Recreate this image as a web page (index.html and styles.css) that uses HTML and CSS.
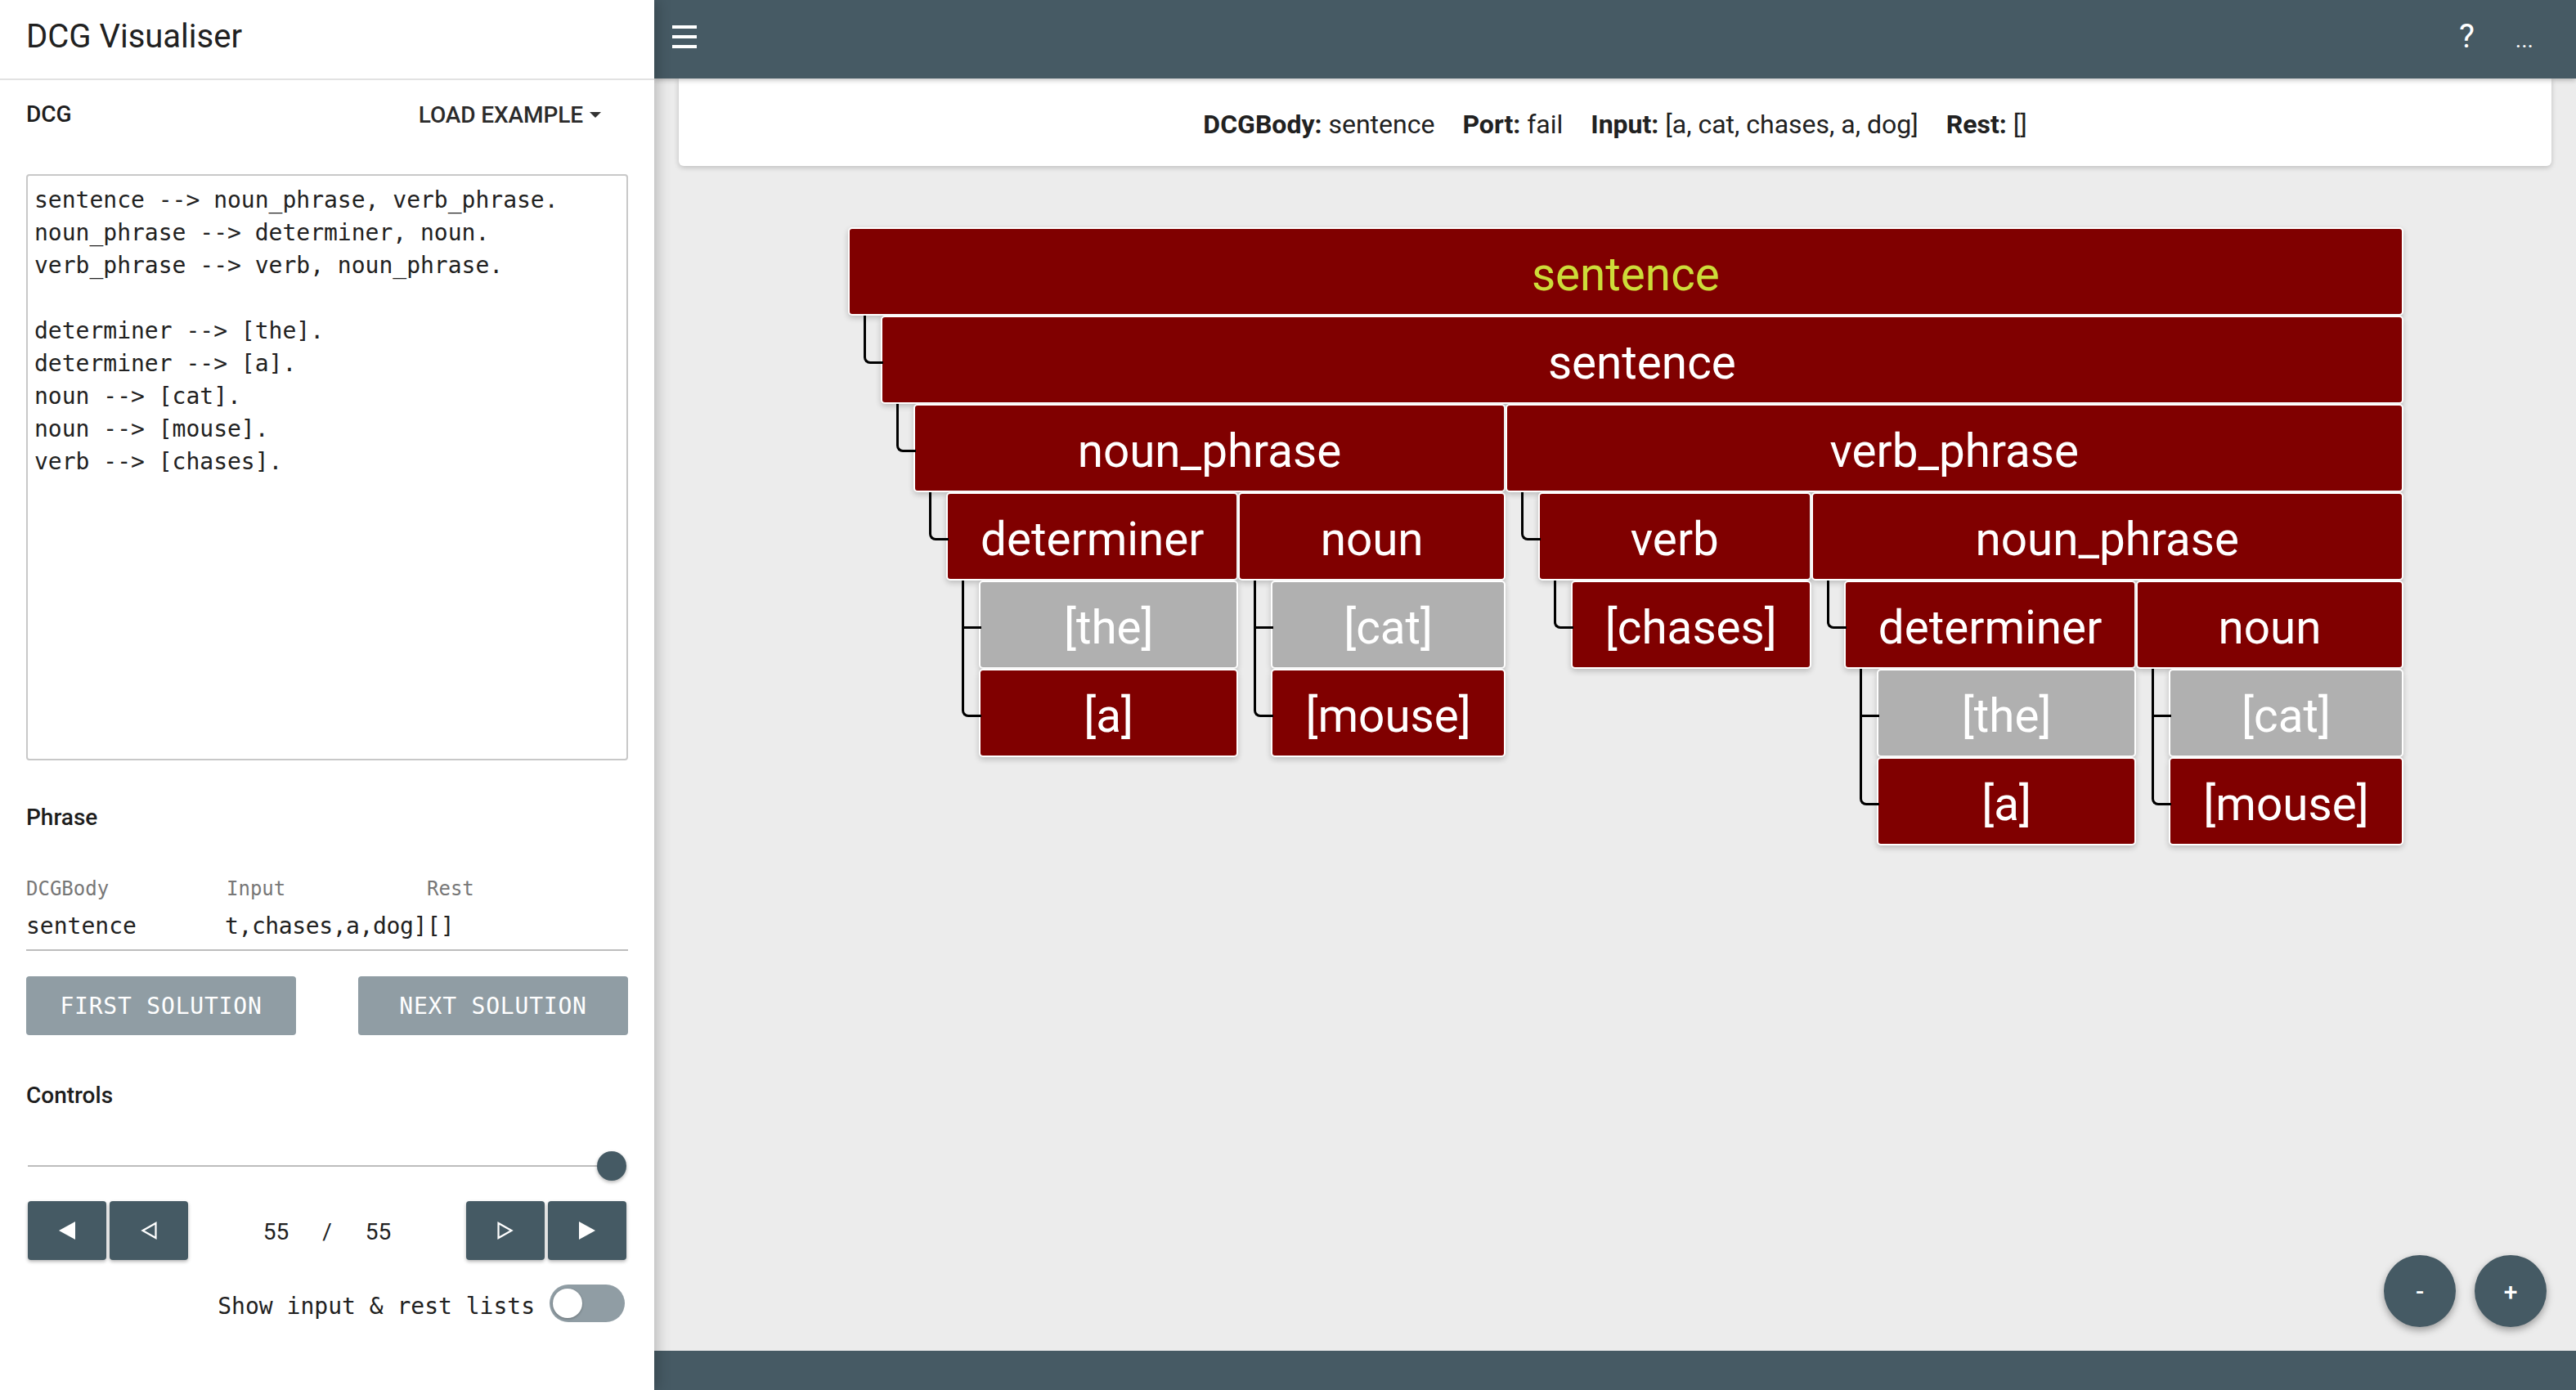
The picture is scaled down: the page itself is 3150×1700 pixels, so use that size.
FILE: index.html
```html
<!DOCTYPE html>
<html lang="en">
<head>
<meta charset="utf-8">
<title>DCG Visualiser</title>
<link rel="stylesheet" href="styles.css">
</head>
<body>
<div class="app">
  <aside class="sidebar">
    <header class="side-head"><h1 class="app-title">DCG Visualiser</h1></header>
    <div class="side-body">
      <div class="dcg-row">
        <span class="section-title">DCG</span>
        <button class="load-btn">LOAD EXAMPLE <svg class="caret" width="14" height="7" viewBox="0 0 14 7"><path d="M0 0H14L7 7Z" fill="#333"/></svg></button>
      </div>
      <pre class="code">sentence --&gt; noun_phrase, verb_phrase.
noun_phrase --&gt; determiner, noun.
verb_phrase --&gt; verb, noun_phrase.

determiner --&gt; [the].
determiner --&gt; [a].
noun --&gt; [cat].
noun --&gt; [mouse].
verb --&gt; [chases].</pre>
      <div class="section-title phrase-title">Phrase</div>
      <div class="phrase-table">
        <div class="th">DCGBody</div><div class="th">Input</div><div class="th">Rest</div>
        <div class="td">sentence</div><div class="td input-val">t,chases,a,dog]</div><div class="td">[]</div>
      </div>
      <div class="solution-row">
        <button class="sol-btn">FIRST SOLUTION</button>
        <button class="sol-btn">NEXT SOLUTION</button>
      </div>
      <div class="section-title controls-title">Controls</div>
      <div class="slider"><div class="track"></div><div class="thumb"></div></div>
      <div class="nav-row">
        <div class="nav-group">
          <button class="nav-btn"><svg width="20" height="22" viewBox="0 0 20 22"><path d="M20 0V22L0 11Z" fill="#fff"/></svg></button>
          <button class="nav-btn"><svg width="20" height="22" viewBox="0 0 20 22"><path d="M18.5 2V20L2.5 11Z" fill="none" stroke="#fff" stroke-width="2.2" stroke-linejoin="miter"/></svg></button>
        </div>
        <div class="counter"><span>55</span><span>/</span><span>55</span></div>
        <div class="nav-group">
          <button class="nav-btn"><svg width="20" height="22" viewBox="0 0 20 22"><path d="M1.5 2V20L17.5 11Z" fill="none" stroke="#fff" stroke-width="2.2" stroke-linejoin="miter"/></svg></button>
          <button class="nav-btn"><svg width="20" height="22" viewBox="0 0 20 22"><path d="M0 0V22L20 11Z" fill="#fff"/></svg></button>
        </div>
      </div>
      <div class="toggle-row">
        <span class="toggle-label">Show input &amp; rest lists</span>
        <span class="switch"><span class="knob"></span></span>
      </div>
    </div>
  </aside>
  <main class="main">
    <div class="topbar">
      <svg class="menu-icon" width="30" height="28" viewBox="0 0 30 28"><rect x="0" y="0" width="30" height="4" fill="#fff"/><rect x="0" y="12" width="30" height="4" fill="#fff"/><rect x="0" y="24" width="30" height="4" fill="#fff"/></svg>
      <div class="top-actions">
        <span class="help">?</span>
        <span class="more">...</span>
      </div>
    </div>
    <div class="canvas">
      <div class="info-card">
        <span><b>DCGBody:</b> sentence</span>
        <span><b>Port:</b> fail</span>
        <span><b>Input:</b> [a, cat, chases, a, dog]</span>
        <span><b>Rest:</b> []</span>
      </div>
      <div class="tree">
        <div class="node">
          <div class="box goal">sentence</div>
          <div class="kids alt">
            <div class="node conn">
              <div class="box">sentence</div>
              <div class="kids seq">
                <div class="node conn">
                  <div class="box">noun_phrase</div>
                  <div class="kids seq">
                    <div class="node conn">
                      <div class="box">determiner</div>
                      <div class="kids alt">
                        <div class="node conn tee"><div class="box fail">[the]</div></div>
                        <div class="node conn"><div class="box">[a]</div></div>
                      </div>
                    </div>
                    <div class="node">
                      <div class="box">noun</div>
                      <div class="kids alt">
                        <div class="node conn tee"><div class="box fail">[cat]</div></div>
                        <div class="node conn"><div class="box">[mouse]</div></div>
                      </div>
                    </div>
                  </div>
                </div>
                <div class="node">
                  <div class="box">verb_phrase</div>
                  <div class="kids seq">
                    <div class="node conn">
                      <div class="box">verb</div>
                      <div class="kids alt">
                        <div class="node conn"><div class="box">[chases]</div></div>
                      </div>
                    </div>
                    <div class="node">
                      <div class="box">noun_phrase</div>
                      <div class="kids seq">
                        <div class="node conn">
                          <div class="box">determiner</div>
                          <div class="kids alt">
                            <div class="node conn tee"><div class="box fail">[the]</div></div>
                            <div class="node conn"><div class="box">[a]</div></div>
                          </div>
                        </div>
                        <div class="node">
                          <div class="box">noun</div>
                          <div class="kids alt">
                            <div class="node conn tee"><div class="box fail">[cat]</div></div>
                            <div class="node conn"><div class="box">[mouse]</div></div>
                          </div>
                        </div>
                      </div>
                    </div>
                  </div>
                </div>
              </div>
            </div>
          </div>
        </div>
      </div>
      <div class="fabs">
        <button class="fab">-</button>
        <button class="fab">+</button>
      </div>
    </div>
    <div class="bottombar"></div>
  </main>
</div>
</body>
</html>
```
FILE: styles.css
```css
* { box-sizing: border-box; }
html, body { margin: 0; padding: 0; }
body {
  width: 3150px;
  height: 1700px;
  overflow: hidden;
  font-family: Roboto, "Liberation Sans", sans-serif;
  color: #212121;
  background: #ececec;
}
.app { display: flex; height: 1700px; }

/* ---------- sidebar ---------- */
.sidebar {
  width: 800px;
  flex: none;
  background: #fff;
  position: relative;
  z-index: 3;
  box-shadow: 4px 0 16px rgba(0, 0, 0, 0.22);
  display: flex;
  flex-direction: column;
}
.side-head {
  height: 98px;
  border-bottom: 2px solid #e2e2e2;
  display: flex;
  align-items: center;
  padding: 0 32px 8px;
}
.app-title { margin: 0; font-size: 40px; font-weight: 400; color: #212121; }
.side-body { padding: 0 32px; display: flex; flex-direction: column; }
.dcg-row {
  height: 82px;
  display: flex;
  align-items: center;
  justify-content: space-between;
}
.section-title { font-size: 28px; font-weight: 500; line-height: 40px; color: #1d1d1d; padding-top: 2px; }
.load-btn {
  border: 0;
  background: none;
  font-family: Roboto, "Liberation Sans", sans-serif;
  font-size: 28px;
  font-weight: 500;
  color: #2b2b2b;
  display: flex;
  align-items: center;
  gap: 8px;
  padding: 2px 33px 0 0;
  letter-spacing: -0.1px;
}
.code {
  margin: 33px 0 0;
  height: 717px;
  border: 2px solid #c8c8c8;
  border-radius: 4px;
  padding: 10px 8px 8px;
  font-family: "DejaVu Sans Mono", monospace;
  font-size: 28px;
  line-height: 40px;
  color: #212121;
  white-space: pre;
  overflow: hidden;
}
.phrase-title { margin-top: 48px; }
.phrase-table {
  margin-top: 49px;
  display: grid;
  grid-template-columns: 245px 245px 1fr;
  row-gap: 10px;
  padding-top: 2px;
  padding-bottom: 8px;
  border-bottom: 2px solid #bdbdbd;
  font-family: "DejaVu Sans Mono", monospace;
}
.th { font-size: 24px; line-height: 32px; color: #777; }
.td { font-size: 28px; line-height: 40px; color: #212121; white-space: nowrap; }
.input-val { letter-spacing: -0.4px; margin-left: -2px; }
.solution-row { margin-top: 31px; display: flex; justify-content: space-between; }
.sol-btn {
  width: 330px;
  height: 72px;
  border: 0;
  border-radius: 4px;
  background: #909da4;
  color: #fff;
  font-family: "DejaVu Sans Mono", monospace;
  font-size: 28px;
  letter-spacing: 0.8px;
  padding-top: 2px;
}
.controls-title { margin-top: 52px; }
.slider {
  margin-top: 46px;
  height: 40px;
  display: flex;
  align-items: center;
  padding-left: 2px;
}
.track { flex: 1; height: 2px; background: #bdbdbd; }
.thumb {
  width: 36px;
  height: 36px;
  border-radius: 50%;
  background: #455a64;
  box-shadow: 0 2px 4px rgba(0, 0, 0, 0.3);
  margin-right: 2px;
}
.nav-row {
  margin-top: 23px;
  display: flex;
  justify-content: space-between;
  align-items: center;
  padding: 0 2px;
}
.nav-group { display: flex; gap: 4px; }
.nav-btn {
  width: 96px;
  height: 72px;
  border: 0;
  border-radius: 4px;
  background: #455a64;
  box-shadow: 0 2px 4px rgba(0, 0, 0, 0.3);
  display: flex;
  align-items: center;
  justify-content: center;
  padding: 0;
}
.counter {
  display: flex;
  gap: 41px;
  font-family: Roboto, "Liberation Sans", sans-serif;
  font-size: 28px;
  color: #212121;
  padding-top: 2px;
}
.toggle-row {
  margin-top: 29px;
  height: 48px;
  display: flex;
  justify-content: flex-end;
  align-items: center;
  gap: 18px;
  padding-right: 4px;
}
.toggle-label {
  font-family: "DejaVu Sans Mono", monospace;
  font-size: 28px;
  color: #212121;
  padding-top: 6px;
}
.switch {
  width: 92px;
  height: 46px;
  border-radius: 23px;
  background: #909da4;
  display: flex;
  align-items: center;
  padding-left: 4px;
}
.knob {
  width: 36px;
  height: 36px;
  border-radius: 50%;
  background: #fff;
  box-shadow: 0 1px 3px rgba(0, 0, 0, 0.3);
}

/* ---------- main ---------- */
.main { flex: 1; display: flex; flex-direction: column; min-width: 0; }
.topbar {
  height: 96px;
  flex: none;
  background: #465a64;
  display: flex;
  align-items: center;
  position: relative;
  z-index: 2;
  box-shadow: 0 2px 6px rgba(0, 0, 0, 0.25);
  padding: 0 52px 0 22px;
  color: #fff;
}
.menu-icon { display: block; align-self: flex-start; margin-top: 31px; }
.top-actions {
  margin-left: auto;
  display: flex;
  align-items: baseline;
  gap: 50px;
  padding-bottom: 6px;
}
.help { font-size: 40px; line-height: 48px; }
.more { font-size: 28px; }
.canvas { flex: 1; position: relative; background: #ececec; }
.info-card {
  margin: 0 30px;
  height: 107px;
  background: #fff;
  border-radius: 0 0 6px 6px;
  box-shadow: 0 2px 6px rgba(0, 0, 0, 0.2);
  display: flex;
  align-items: center;
  justify-content: center;
  gap: 34px;
  font-size: 32px;
  color: #212121;
  padding-top: 4px;
}
.info-card b { font-weight: 700; }
.bottombar { height: 48px; flex: none; background: #465a64; }
.fabs {
  position: absolute;
  right: 36px;
  bottom: 29px;
  display: flex;
  gap: 23px;
}
.fab {
  width: 88px;
  height: 88px;
  border-radius: 50%;
  border: 0;
  background: #455a64;
  color: #fff;
  font-family: Roboto, "Liberation Sans", sans-serif;
  font-size: 30px;
  font-weight: 500;
  box-shadow: 0 4px 10px rgba(0, 0, 0, 0.35);
  padding: 0;
}

/* ---------- tree ---------- */
.tree { margin: 75px 0 0 237px; display: flex; align-items: flex-start; }
.node { display: flex; flex-direction: column; position: relative; flex: none; }
.box {
  height: 108px;
  border: 2px solid #fff;
  border-radius: 5px;
  background: #800000;
  color: #fff;
  font-size: 56.6px;
  line-height: 104px;
  padding: 4px 40px 0;
  text-align: center;
  white-space: nowrap;
  box-shadow: 0 3px 7px rgba(0, 0, 0, 0.2);
}
.box.goal { color: #cddc39; }
.box.fail { background: #b0b0b0; }
.kids { display: flex; padding-left: 40px; }
.kids.alt { flex-direction: column; }
.conn::before {
  content: "";
  position: absolute;
  left: -21px;
  top: 0;
  width: 21px;
  height: 56px;
  border-left: 3px solid #000;
  border-bottom: 3px solid #000;
  border-bottom-left-radius: 8px;
}
.conn.tee::before { border-bottom-left-radius: 0; }
.conn.tee::after {
  content: "";
  position: absolute;
  left: -21px;
  top: 0;
  bottom: 0;
  width: 3px;
  background: #000;
}
```
